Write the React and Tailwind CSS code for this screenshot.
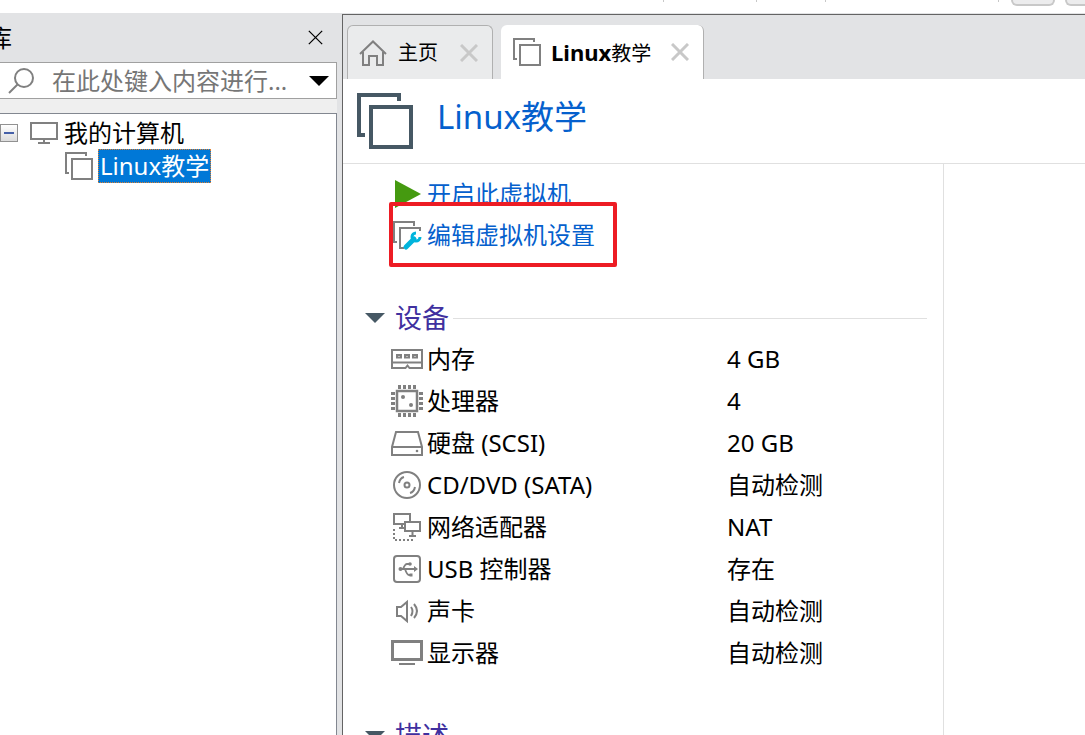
import React, { useState } from "react";

const uiFont = "font-['Noto_Sans','Noto_Sans_CJK_SC',sans-serif]";

// two stacked squares, used for every virtual machine
function VmIcon({ className, size = 28, stroke = 2 }) {
  return (
    <svg className={className} width={size} height={size} viewBox="0 0 28 28" fill="none" stroke="currentColor" strokeWidth={stroke} aria-hidden="true">
      <path d="M4 21H1V1h20v3" />
      <path d="M7 7h20v20H7z" />
    </svg>
  );
}

function CloseIcon({ size, stroke }) {
  return (
    <svg width={size} height={size} viewBox="0 0 18 18" fill="none" stroke="currentColor" strokeWidth={stroke} aria-hidden="true">
      <path d="M1 1l16 16M17 1L1 17" />
    </svg>
  );
}

const icons = {
  memory: (
    <>
      <path d="M1 7h30v18H18.500l-2-2.500-2 2.500H1zM1 19.500h30" />
      <path d="M6 12h4v2.500H6zM14 12h4v2.500h-4zM22 12h4v2.500h-4z" />
    </>
  ),
  cpu: (
    <>
      <path d="M6 6h20v20H6z" strokeWidth="2.500" />
      <path d="M8.500 0v4M13.500 0v4M18.500 0v4M23.500 0v4M8.500 28v4M13.500 28v4M18.500 28v4M23.500 28v4" strokeWidth="3" />
      <path d="M0 8.500h4M0 13.500h4M0 18.500h4M0 23.500h4M28 8.500h4M28 13.500h4M28 18.500h4M28 23.500h4" strokeWidth="3" />
      <circle cx="12" cy="12" r="2" fill="currentColor" stroke="none" />
      <circle cx="20" cy="20" r="2" fill="currentColor" stroke="none" />
    </>
  ),
  disk: (
    <>
      <path d="M5 5h22l4 15v8H1v-8zM1 20h30" />
      <circle cx="26" cy="24" r="1.300" fill="currentColor" stroke="none" />
    </>
  ),
  cd: (
    <>
      <circle cx="16" cy="16" r="13" />
      <circle cx="16" cy="16" r="2.500" />
      <path d="M8 14q1-5 5-6M24 18q-1 5-5 6" />
    </>
  ),
  network: (
    <>
      <path d="M14 13H3V3h16v7M8 17h6M11 13v4" />
      <path d="M14 11h15v9H14zM21.500 20v5M18 25h7" />
      <path d="M3 18v11h20" strokeDasharray="2 2" />
    </>
  ),
  usb: (
    <>
      <rect x="3" y="3" width="26" height="26" rx="3" />
      <path d="M8 16h17M12 16q2-5 4-5h2M14 16q2 6 4 6h2" strokeWidth="1.800" />
      <circle cx="9.500" cy="16" r="2" fill="currentColor" stroke="none" />
      <circle cx="19" cy="11" r="1.800" fill="currentColor" stroke="none" />
      <path d="M23 13l4 3-4 3zM18.500 20.500h3v3h-3z" fill="currentColor" stroke="none" />
    </>
  ),
  sound: (
    <>
      <path d="M6 12h4l6-5v19l-6-5H6z" />
      <path d="M20 12q3 4 0 9M23 9q6 7 0 14" />
    </>
  ),
  display: (
    <>
      <path d="M1.500 4.500h29v18h-29z" strokeWidth="3" />
      <path d="M8 27h16" />
    </>
  ),
};

const devices = [
  { icon: "memory", name: "内存", value: "4 GB" },
  { icon: "cpu", name: "处理器", value: "4" },
  { icon: "disk", name: "硬盘 (SCSI)", value: "20 GB" },
  { icon: "cd", name: "CD/DVD (SATA)", value: "自动检测" },
  { icon: "network", name: "网络适配器", value: "NAT" },
  { icon: "usb", name: "USB 控制器", value: "存在" },
  { icon: "sound", name: "声卡", value: "自动检测" },
  { icon: "display", name: "显示器", value: "自动检测" },
];

function Toolbar() {
  return (
    <div className="flex h-[13px] shrink-0 items-start justify-end overflow-hidden bg-white">
      <span className="mr-[92px] h-0.5 w-px bg-[#c8c8c8]" />
      <span className="mr-[68px] h-0.5 w-px bg-[#c8c8c8]" />
      <span className="mr-[172px] h-0.5 w-px bg-[#c8c8c8]" />
      <span className="mr-3 h-0.5 w-px bg-[#c8c8c8]" />
      <button aria-label="视图" className="mr-2.5 h-1.5 w-11 rounded-b-md border-2 border-t-0 border-[#c8c8c8] bg-[#ececed]" />
      <button aria-label="布局" className="h-1.5 w-5 rounded-bl-md border-b-2 border-l-2 border-[#c8c8c8] bg-[#ececed]" />
    </div>
  );
}

function Sidebar() {
  const [query, setQuery] = useState("");

  return (
    <aside className="flex w-[337px] shrink-0 flex-col">
      <div className="flex h-[49px] items-center justify-between pr-3.5">
        <h2 className="-ml-3 text-2xl">库</h2>
        <button aria-label="关闭">
          <CloseIcon size={15} stroke={1.5} />
        </button>
      </div>

      <div className="flex h-[37px] items-center border-y border-r border-[#a0a0a0] bg-white pr-[7px] pl-2">
        <svg width="27" height="26" viewBox="0 0 27 26" fill="none" stroke="#808080" strokeWidth="2" aria-hidden="true">
          <circle cx="16" cy="10" r="9" />
          <path d="M9.500 16.500L1 25" />
        </svg>
        <input
          type="text"
          aria-label="搜索"
          value={query}
          onChange={(e) => setQuery(e.target.value)}
          placeholder="在此处键入内容进行..."
          className="ml-[17px] h-8 min-w-0 flex-1 text-2xl outline-none placeholder:text-[#767676]"
        />
        <button aria-label="搜索选项">
          <svg width="20" height="10" viewBox="0 0 20 10" aria-hidden="true">
            <path d="M0 0h20L10 10z" />
          </svg>
        </button>
      </div>

      <div className="h-3.5 bg-[#efefef]" />

      <ul className="flex-1 border-t border-r border-[#828790] bg-white pt-0.5 text-2xl">
        <li>
          <div className="flex h-[33px] items-center">
            <button aria-label="折叠" className="flex size-[18px] items-center justify-center border border-[#919191] bg-linear-to-b from-white to-[#dcdcdc]">
              <span className="h-0.5 w-2.5 bg-[#4560a8]" />
            </button>
            <svg className="ml-3" width="28" height="22" viewBox="0 0 28 22" fill="none" stroke="#808080" strokeWidth="2" aria-hidden="true">
              <path d="M1 1h26v16H1zM14 17v4M8 21h12" />
            </svg>
            <span className="ml-1.5">我的计算机</span>
          </div>
          <ul>
            <li className="flex h-[34px] items-center pl-[65px]">
              <VmIcon className="text-[#808080]" />
              <a href="#vm" className="ml-[5px] h-[34px] border border-dotted border-[#e08030] bg-[#0078d7] px-px leading-8 text-white">
                Linux教学
              </a>
            </li>
          </ul>
        </li>
      </ul>
    </aside>
  );
}

function Tabs() {
  return (
    <nav className="flex h-16 items-end gap-2 bg-[#e2e3e5] pl-1 text-xl">
      <div className="flex h-[54px] w-[146px] items-center rounded-t-md border border-b-0 border-[#b0b0b0] bg-[#eaebec] pl-[11px]">
        <svg width="28" height="26" viewBox="0 0 28 26" fill="none" stroke="#808080" strokeWidth="2" aria-hidden="true">
          <path d="M1 14L14 1.500 27 14M4 12v13h6v-9h8v9h6V12" />
        </svg>
        <a href="#home" className="ml-[11px]">主页</a>
        <button aria-label="关闭主页" className="ml-[22px] text-[#c8c8c8]">
          <CloseIcon size={18} stroke={3} />
        </button>
      </div>
      <div className="flex h-[54px] w-[203px] items-center rounded-t-md border-r border-[#b0b0b0] bg-white pl-3">
        <VmIcon className="text-[#808080]" />
        <a href="#vm" className="ml-2.5 whitespace-nowrap">
          <b className="text-[22px]">Linux</b>教学
        </a>
        <button aria-label="关闭 Linux教学" className="ml-5 text-[#c8c8c8]">
          <CloseIcon size={18} stroke={3} />
        </button>
      </div>
    </nav>
  );
}

function SectionTitle({ children, open, onToggle }) {
  return (
    <h2 className="flex h-9 items-center text-[27px] text-[#40309f]">
      <button aria-expanded={open} onClick={onToggle} className="flex items-center gap-2.5 leading-9">
        <svg width="20" height="10" viewBox="0 0 20 10" aria-hidden="true">
          <path d="M0 0h20L10 10z" fill="#465864" />
        </svg>
        {children}
      </button>
      <span className="ml-1 h-px flex-1 bg-[#e0e0e0]" />
    </h2>
  );
}

function DeviceTable() {
  return (
    <table className="mt-0.5 ml-[26px] text-left text-2xl">
      <tbody>
        {devices.map((device) => (
          <tr key={device.icon} className="h-[42px]">
            <th scope="row" className="w-[336px] p-0 font-normal">
              <div className="flex items-center gap-1">
                <svg width="32" height="32" viewBox="0 0 32 32" fill="none" stroke="currentColor" strokeWidth="2" className="text-[#808080]" aria-hidden="true">
                  {icons[device.icon]}
                </svg>
                {device.name}
              </div>
            </th>
            <td className="p-0">{device.value}</td>
          </tr>
        ))}
      </tbody>
    </table>
  );
}

export default function App() {
  const [devicesOpen, setDevicesOpen] = useState(true);
  const [notesOpen, setNotesOpen] = useState(true);

  return (
    <div className={`flex h-screen flex-col overflow-hidden bg-[#e2e3e5] text-black ${uiFont}`}>
      <Toolbar />
      <div className="flex min-h-0 flex-1">
        <Sidebar />

        <main className="mt-px ml-[5px] flex min-w-0 flex-1 flex-col overflow-hidden border-t border-l border-[#646464] bg-white">
          <Tabs />
          <header className="flex h-[85px] shrink-0 items-center border-b border-[#e0e0e0] pl-3.5">
            <VmIcon className="text-[#465864]" size={56} />
            <h1 className="ml-6 pb-2 text-[33px] leading-10 text-[#0560cd]">Linux教学</h1>
          </header>

          <div className="flex min-h-0 flex-1">
            <section className="flex w-[601px] shrink-0 flex-col gap-11 border-r border-[#e0e0e0] pt-[9px] pr-4 pl-[22px]">
              <div className="relative pb-px pl-[26px] text-2xl text-[#0560cd]">
                <a href="#power-on" className="flex h-[41px] items-center gap-1">
                  <svg width="32" height="28" viewBox="0 0 32 28" aria-hidden="true">
                    <path d="M4 0l26 14L4 28z" fill="#459a10" />
                  </svg>
                  开启此虚拟机
                </a>
                <a href="#settings" className="flex h-[41px] items-center gap-1">
                  <svg width="32" height="32" viewBox="0 0 32 32" fill="none" stroke="#808080" strokeWidth="2" aria-hidden="true">
                    <path d="M6 23H3V3h20v4M13 29H9V9h20v3" />
                    <path d="M15 28l8-8" stroke="#00b4dc" strokeWidth="5" strokeLinecap="round" />
                    <path d="M29 18a4 4 0 1 1-4-4" stroke="#00b4dc" strokeWidth="3" />
                  </svg>
                  编辑虚拟机设置
                </a>
                {/* highlight around the settings link */}
                <div className="pointer-events-none absolute top-[29px] left-6 h-[65px] w-[228px] rounded-xs border-4 border-[#ed1c24]" />
              </div>

              <div>
                <SectionTitle open={devicesOpen} onToggle={() => setDevicesOpen(!devicesOpen)}>设备</SectionTitle>
                {devicesOpen && <DeviceTable />}
              </div>
              <SectionTitle open={notesOpen} onToggle={() => setNotesOpen(!notesOpen)}>描述</SectionTitle>
            </section>
          </div>
        </main>
      </div>
    </div>
  );
}
